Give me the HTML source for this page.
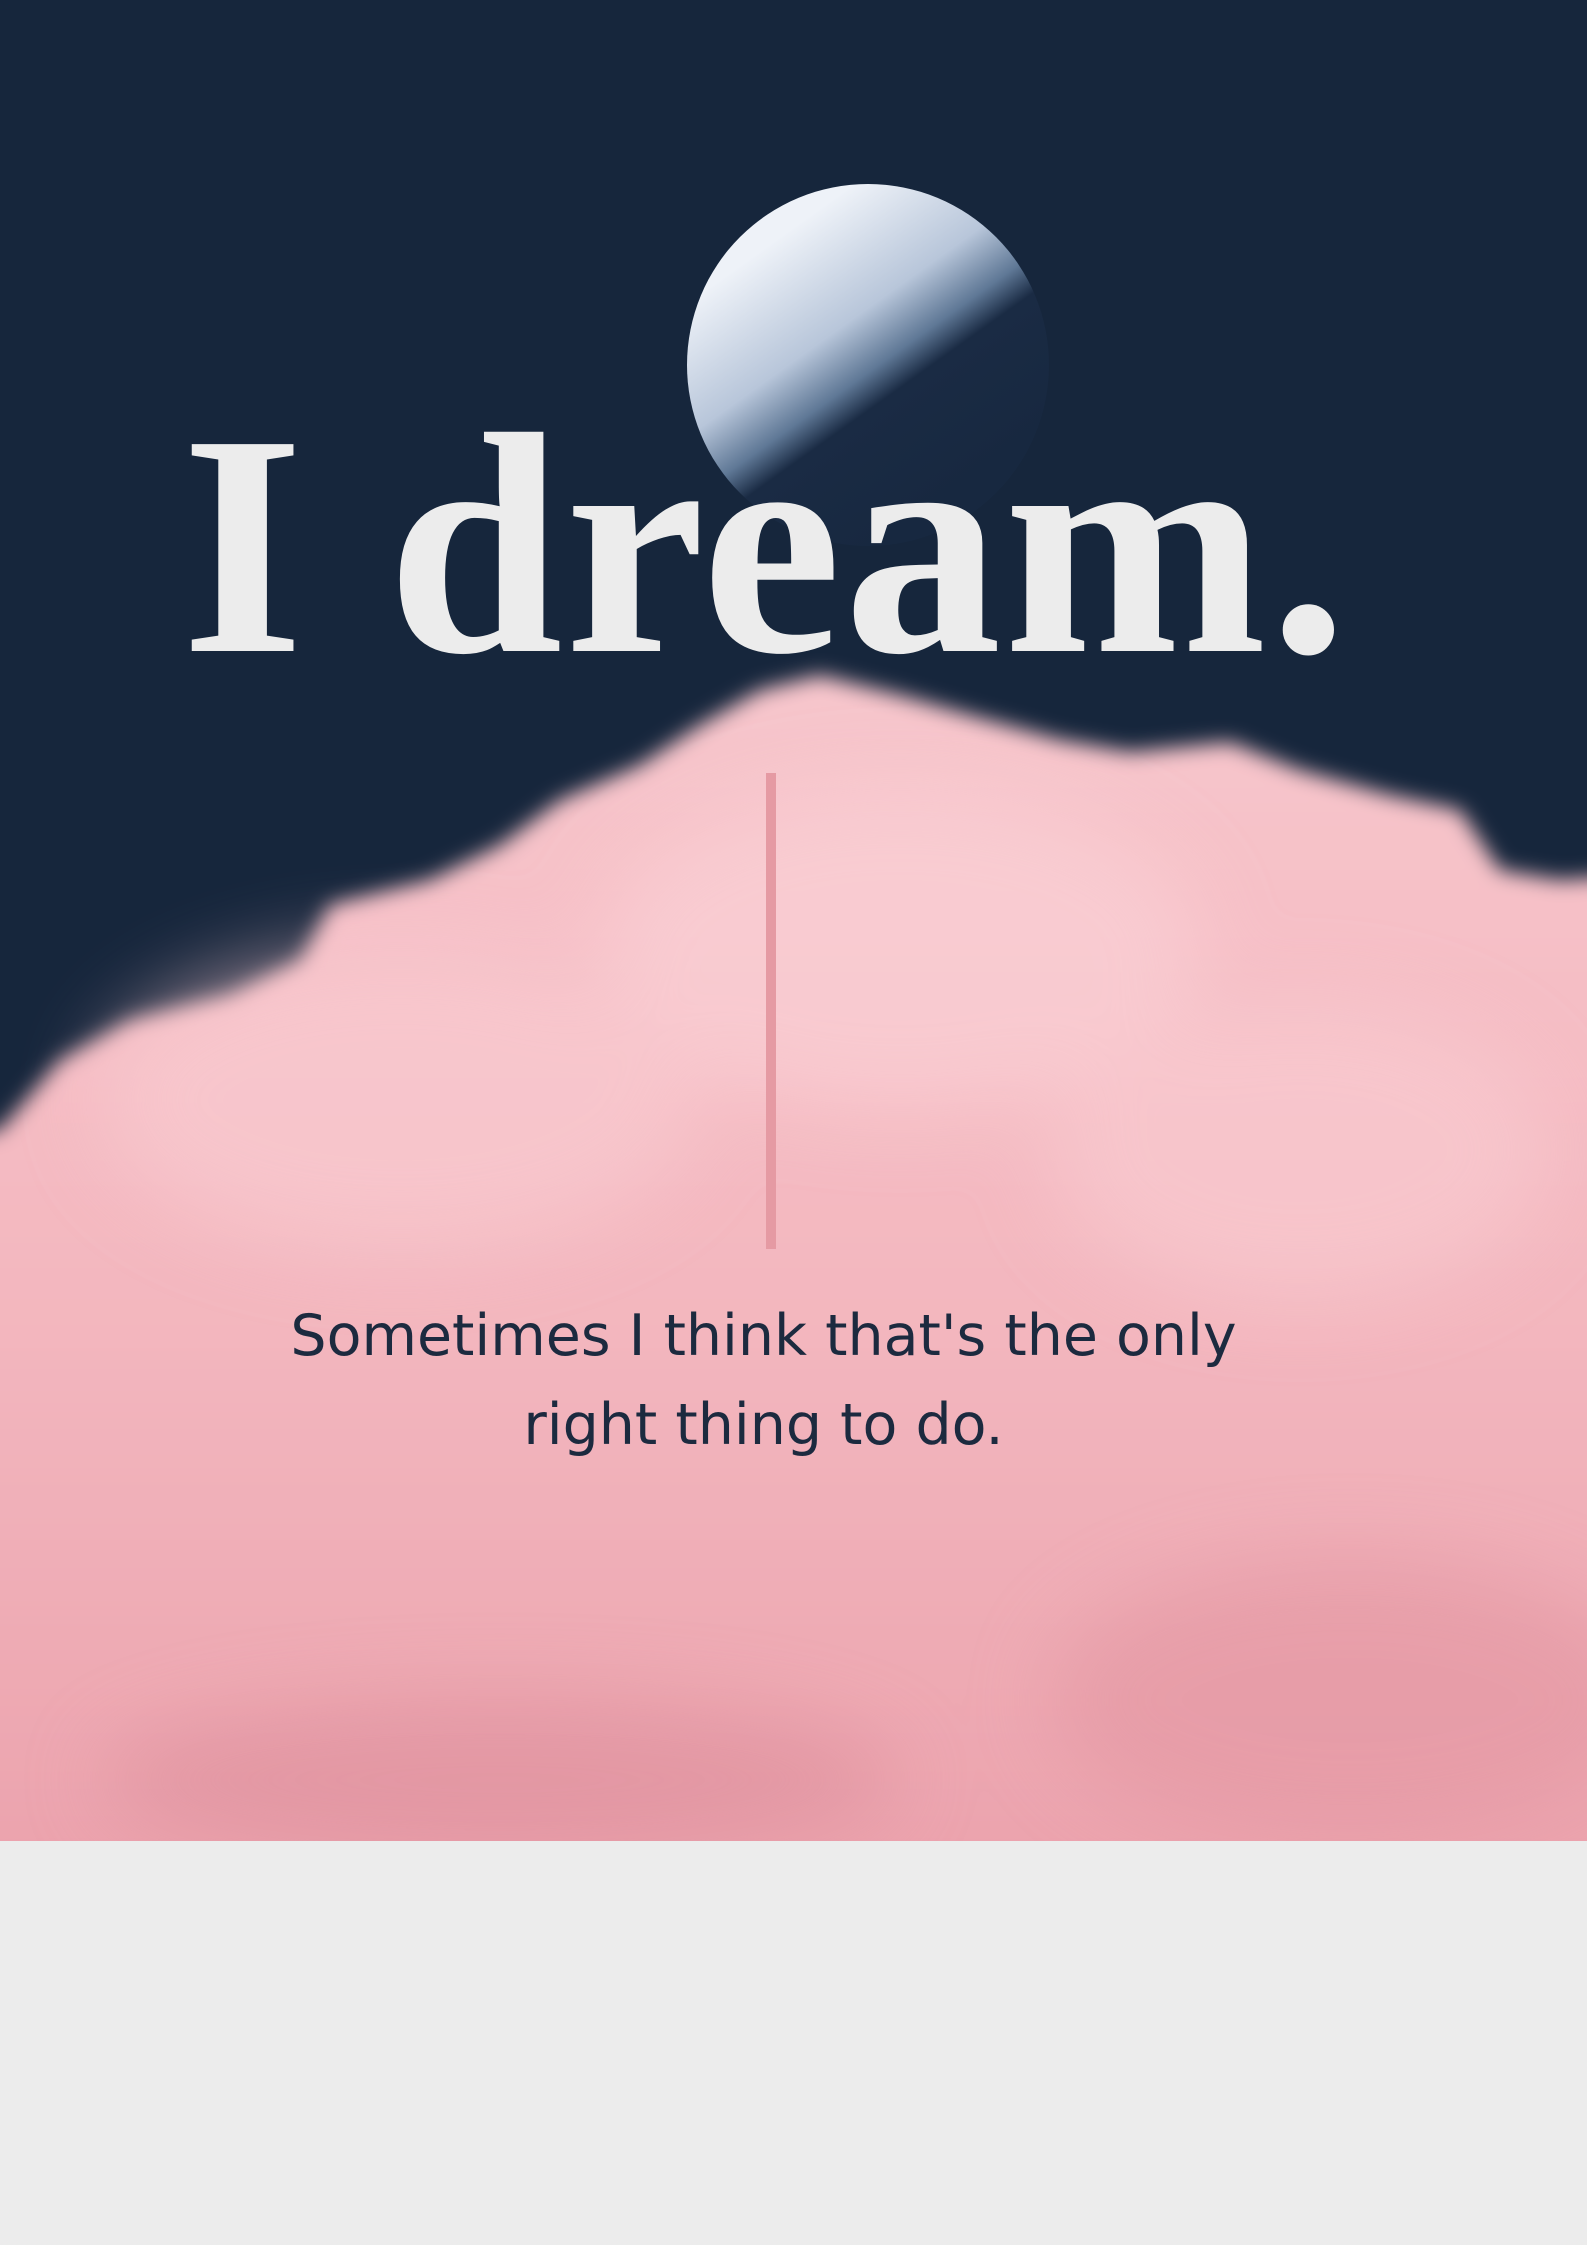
<!DOCTYPE html>
<html><head><meta charset="utf-8"><style>
html,body{margin:0;padding:0;background:#ececec}
body{width:1587px;height:2245px;position:relative;overflow:hidden}
svg{position:absolute;left:0;top:0}
.t{position:absolute;left:-28px;width:1587px;text-align:center;font-family:"Liberation Serif",serif;font-weight:bold;color:#ececec;font-size:316px;top:355px;line-height:380px;letter-spacing:2px}
.s{position:absolute;left:0;width:1527px;text-align:center;font-family:"DejaVu Sans",sans-serif;color:#1c2a3f;font-size:57px;line-height:89px;top:1292px}
.l{position:absolute;left:766px;top:773px;width:10px;height:476px;background:#e59aa3}
</style></head><body>
<svg width="1587" height="2245" viewBox="0 0 1587 2245">
<defs>
<linearGradient id="mg" x1="0.25" y1="0.15" x2="0.75" y2="0.85">
<stop offset="0" stop-color="#eef2f8"/><stop offset="0.35" stop-color="#b8c6da"/><stop offset="0.52" stop-color="#5f7896"/><stop offset="0.62" stop-color="#1a2b44"/><stop offset="1" stop-color="#172840"/>
</linearGradient>
<linearGradient id="cg" x1="0" y1="0" x2="0" y2="1">
<stop offset="0" stop-color="#f7c6cc"/><stop offset="0.5" stop-color="#f3b6be"/><stop offset="1" stop-color="#e99ea9"/>
</linearGradient>
<filter id="b"><feGaussianBlur stdDeviation="10"/></filter>
<filter id="b2"><feGaussianBlur stdDeviation="40"/></filter>
<clipPath id="c"><rect width="1587" height="1841"/></clipPath>
</defs>
<rect width="1587" height="1841" fill="#16263c"/>
<circle cx="868" cy="365" r="181" fill="url(#mg)"/>
<g clip-path="url(#c)">
<g filter="url(#b)">
<path d="M-100,1150 L0,1130 L60,1060 L130,1020 L230,995 L300,960 L330,905 L430,880 L500,845 L560,800 L640,765 L700,725 L760,690 L820,675 L900,695 L980,718 L1060,740 L1130,752 L1230,742 L1300,770 L1390,795 L1460,810 L1500,870 L1560,880 L1700,870 L1700,2000 L-100,2000 Z" fill="url(#cg)"/>
</g>
<g filter="url(#b2)" opacity="0.6">
<ellipse cx="900" cy="950" rx="300" ry="160" fill="#fbd3d8"/>
<ellipse cx="400" cy="1100" rx="300" ry="150" fill="#f9ccd2"/>
<ellipse cx="1300" cy="1150" rx="250" ry="150" fill="#f9ccd2"/>
<ellipse cx="500" cy="1780" rx="400" ry="80" fill="#dd8e9b"/>
<ellipse cx="1350" cy="1700" rx="300" ry="140" fill="#e396a2"/>
</g>
</g>
</svg>
<div class="t">I dream.</div>
<div class="l"></div>
<div class="s">Sometimes I think that's the only<br>right thing to do.</div>
</body></html>
